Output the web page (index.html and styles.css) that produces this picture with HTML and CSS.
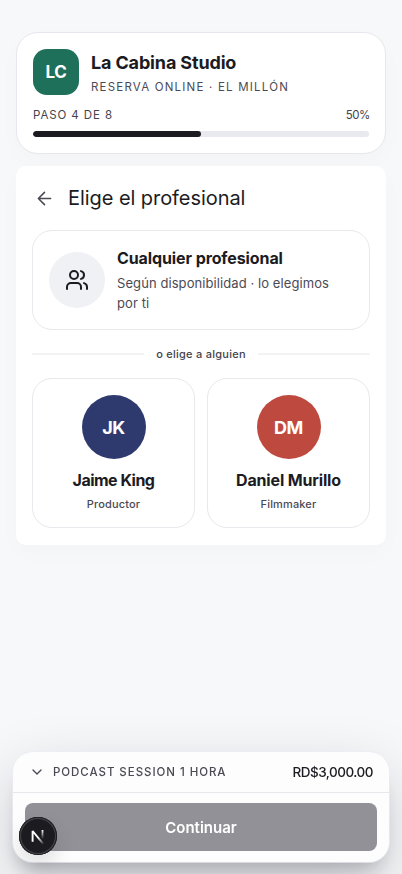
FILE: index.html
```html
<!DOCTYPE html>
<html lang="es">
<head>
<meta charset="utf-8">
<meta name="viewport" content="width=device-width, initial-scale=1">
<title>La Cabina Studio</title>
<link rel="stylesheet" href="styles.css">
</head>
<body>
<main class="page">
  <header class="studio">
    <div class="brand">
      <div class="logo">LC</div>
      <div class="brand-copy">
        <h1>La Cabina Studio</h1>
        <p>RESERVA ONLINE · EL MILLÓN</p>
      </div>
    </div>
    <div class="step"><span class="step-label">PASO 4 DE 8</span><span class="percent">50%</span></div>
    <div class="track"><div class="fill" style="width:50%"></div></div>
  </header>

  <section class="panel">
    <div class="title">
      <svg class="back" viewBox="0 0 24 24"><path d="m12 19-7-7 7-7M19 12H5"/></svg>
      <h2>Elige el profesional</h2>
    </div>
    <div class="any">
      <div class="any-icon">
        <svg viewBox="0 0 24 24"><path d="M16 21v-2a4 4 0 0 0-4-4H6a4 4 0 0 0-4 4v2"/><circle cx="9" cy="7" r="4"/><path d="M22 21v-2a4 4 0 0 0-3-3.87M16 3.13a4 4 0 0 1 0 7.75"/></svg>
      </div>
      <div class="any-copy">
        <h3>Cualquier profesional</h3>
        <p>Según disponibilidad · lo elegimos<br>por ti</p>
      </div>
    </div>
    <div class="divider"><span>o elige a alguien</span></div>
    <div class="people">
      <article class="person">
        <div class="avatar navy">JK</div>
        <h3 class="jaime">Jaime King</h3>
        <p>Productor</p>
      </article>
      <article class="person">
        <div class="avatar red">DM</div>
        <h3>Daniel Murillo</h3>
        <p>Filmmaker</p>
      </article>
    </div>
  </section>
</main>

<footer class="checkout">
  <div class="summary">
    <svg class="chevron" viewBox="0 0 24 24"><path d="m6 9 6 6 6-6"/></svg>
    <span class="service">PODCAST SESSION 1 HORA</span>
    <span class="price">RD$3,000.00</span>
  </div>
  <div class="action"><button>Continuar</button></div>
</footer>

<div class="badge">
  <svg viewBox="0 0 38 38">
    <defs>
      <linearGradient id="diag" x1="20" y1="20" x2="24.5" y2="26" gradientUnits="userSpaceOnUse"><stop stop-color="#fff"/><stop offset="1" stop-color="#fff" stop-opacity="0.15"/></linearGradient>
      <linearGradient id="stem" x1="0" y1="13" x2="0" y2="22" gradientUnits="userSpaceOnUse"><stop stop-color="#fff"/><stop offset="1" stop-color="#fff" stop-opacity="0"/></linearGradient>
    </defs>
    <path d="M13.6 24.8V14L24 26.6" fill="none" stroke="url(#diag)" stroke-width="1.9" stroke-linejoin="bevel"/>
    <rect x="22.6" y="13" width="1.8" height="9.5" fill="url(#stem)"/>
  </svg>
</div>
</body>
</html>
```
FILE: styles.css
```css
* { box-sizing: border-box; }
body {
  margin: 0;
  height: 874px;
  overflow: hidden;
  background: #f7f8fa;
  color: #1c1b22;
  font-family: Inter, "Liberation Sans", Arial, sans-serif;
}
h1, h2, h3, p { margin: 0; white-space: nowrap; }
svg { fill: none; stroke: currentColor; stroke-width: 2; stroke-linecap: round; stroke-linejoin: round; flex: none; }

.page { padding: 32px 16px 0; }
.studio {
  height: 122px;
  padding: 16px;
  border: 1px solid #e7e7ed;
  border-radius: 22px;
  background: #fff;
  box-shadow: 0 8px 24px rgba(40, 45, 65, .018);
}
.brand { display: flex; gap: 12px; height: 46px; }
.logo {
  display: grid;
  place-items: center;
  width: 46px;
  height: 46px;
  border-radius: 14px;
  background: #1f705b;
  color: #fff;
  font-size: 17px;
  font-weight: 700;
  letter-spacing: -.4px;
}
h1 { height: 27px; font-size: 18px; line-height: 28px; font-weight: 700; letter-spacing: -.15px; }
.brand-copy p { font-size: 11.5px; line-height: 22px; letter-spacing: 1.2px; color: #4b4a54; }
.step { display: flex; justify-content: space-between; margin-top: 11px; height: 18px; line-height: 18px; font-size: 11.5px; color: #44434d; }
.step-label { letter-spacing: .9px; }
.percent { margin-right: -.6px; letter-spacing: -.6px; }
.track { height: 6px; margin-top: 7px; border-radius: 3px; background: #e9eaef; overflow: hidden; }
.fill { height: 100%; border-radius: 3px; background: #1c1b22; }

.panel {
  height: 379px;
  margin-top: 12px;
  padding: 16px;
  border-radius: 10px;
  background: #fff;
  box-shadow: 0 8px 24px rgba(40, 45, 65, .018);
}
.title { display: flex; align-items: center; gap: 13.5px; height: 32px; padding-left: 1.5px; }
.back { width: 21px; height: 21px; color: #4b4a54; stroke-width: 1.8; }
h2 { font-size: 20px; line-height: 32px; font-weight: 400; letter-spacing: -.06px; }
.any {
  display: flex;
  align-items: center;
  gap: 12px;
  height: 100px;
  margin-top: 16px;
  padding: 0 16px;
  border: 1px solid #e9e9ed;
  border-radius: 20px;
}
.any-icon { display: grid; place-items: center; width: 56px; height: 56px; border-radius: 50%; background: #f0f1f5; }
.any-icon svg { width: 24px; height: 24px; }
h3 { font-size: 16px; line-height: 24px; font-weight: 700; letter-spacing: -.16px; }
.any-copy { height: 68px; }
.any-copy h3 { margin-bottom: 3px; letter-spacing: -.1px; }
.any-copy p { font-size: 13px; line-height: 20px; letter-spacing: .08px; color: #4b4a54; }
.divider { display: flex; align-items: center; gap: 12px; height: 16px; margin-top: 16px; font-size: 11px; font-weight: 500; letter-spacing: .26px; color: #44434d; }
.divider::before, .divider::after { content: ""; flex: 1; height: 2px; background: #f3f3f5; }
.people { display: grid; grid-template-columns: 1fr 1fr; gap: 12px; margin-top: 16px; }
.person {
  display: flex;
  flex-direction: column;
  align-items: center;
  height: 150px;
  padding-top: 16px;
  border: 1px solid #e8e8ed;
  border-radius: 20px;
}
.avatar { display: grid; place-items: center; width: 64px; height: 64px; border-radius: 50%; color: #fff; font-size: 18px; font-weight: 700; letter-spacing: -.4px; }
.navy { background: #2e3a6e; }
.red { background: #be4a3f; }
.person h3 { margin-top: 9px; }
.person .jaime { letter-spacing: -.5px; }
.person p { margin-top: 3px; font-size: 11px; line-height: 18px; font-weight: 500; letter-spacing: .15px; color: #4b4a54; }

.checkout {
  position: fixed;
  left: 13px;
  right: 13px;
  bottom: 12px;
  height: 110px;
  border-radius: 20px;
  background: #fdfdfe;
  box-shadow: 0 0 0 1px rgba(235, 235, 242, .7), 0 24px 64px rgba(20, 20, 32, .2), 0 16px 20px -10px rgba(20, 20, 32, .24);
}
.summary { display: flex; align-items: center; height: 41px; padding: 0 16px; border-bottom: 1px solid #e6e6eb; }
.chevron { width: 16px; height: 16px; color: #4b4a54; }
.service { margin-left: 8px; font-size: 11.5px; font-weight: 500; letter-spacing: .95px; white-space: nowrap; color: #4b4a54; }
.price { margin-left: auto; font-size: 13.5px; font-weight: 500; letter-spacing: -.5px; }
.action { padding: 10px 12px 0; }
button {
  display: block;
  width: 100%;
  height: 48px;
  padding: 0;
  border: 0;
  border-radius: 8px;
  background: #929197;
  color: #fff;
  font: 600 15px Inter, sans-serif;
  letter-spacing: 0;
}
.badge { position: fixed; left: 19px; bottom: 19px; width: 38px; height: 38px; border-radius: 50%; background: #1c1b20; box-shadow: inset 0 0 0 1px #1c1b20, inset 0 0 0 2px #48474c, 0 10px 20px rgba(0, 0, 0, .12); }
.badge svg { display: block; width: 38px; height: 38px; stroke: none; stroke-linecap: butt; }
```
